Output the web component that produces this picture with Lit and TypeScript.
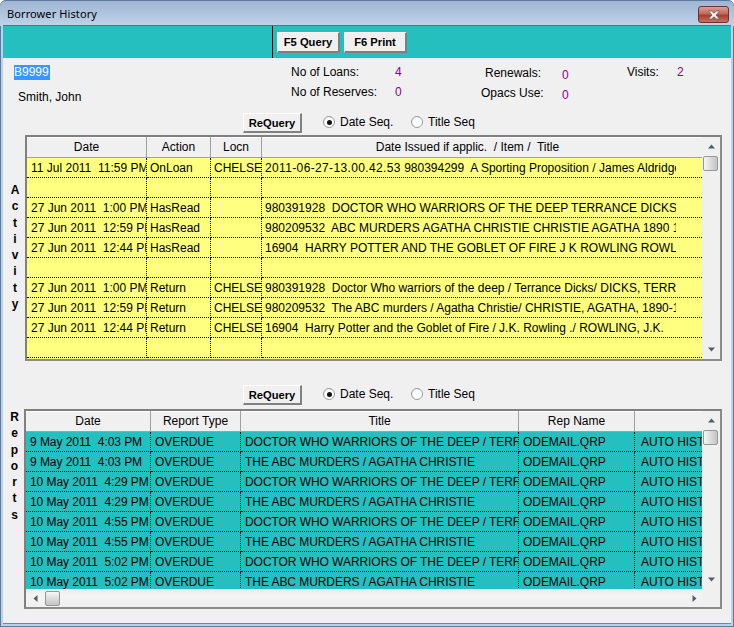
// Borrower History dialog: toolbar, counters and the two dotted data grids.
import { LitElement, html, css, nothing, svg } from 'lit';
import type { TemplateResult } from 'lit';
import { customElement, property } from 'lit/decorators.js';

interface Column {
  label: string;
  width: number;
  clip?: number; // text stops short of the cell edge
  pad?: number;
}

type Cell = string | TemplateResult;

const arrow = (d: string) =>
  html`<svg class="arrow" width="9" height="9" viewBox="0 0 9 9">${svg`<path d=${d} fill="#555c66"></path>`}</svg>`;

@customElement('data-grid')
export class DataGrid extends LitElement {
  @property({ attribute: false }) columns: Column[] = [];
  @property({ attribute: false }) rows: Cell[][] = [];
  @property() fill = '#ffff80';
  @property({ type: Number }) bodyHeight = 200;
  @property({ type: Boolean }) hscroll = false;

  private _template(): string {
    return this.columns.map((c) => `${c.width}px`).join(' ');
  }

  protected override render() {
    const cols = this._template();
    return html`
      <div class="frame">
        <div class="main">
          <div class="head" style="grid-template-columns:${cols}">
            ${this.columns.map(
              (c) => html`<div class="hcell"><span style=${c.clip ? `width:${c.clip}px` : ''}>${c.label}</span></div>`,
            )}
          </div>
          <div class="body" style="height:${this.bodyHeight}px;background:${this.fill}">
            ${this.rows.map(
              (r) => html`
                <div class="row" style="grid-template-columns:${cols}">
                  ${r.map((text, i) => {
                    const c = this.columns[i];
                    const w = c.clip ? `width:${c.clip}px;` : '';
                    const p = c.pad ? `padding-left:${c.pad}px;` : '';
                    return html`<div class="cell"><span style="${w}${p}">${text}</span></div>`;
                  })}
                </div>
              `,
            )}
          </div>
        </div>
        <div class="vs">
          <div class="btn">${arrow('M4.5 2.5 L8 6.5 L1 6.5 Z')}</div>
          <div class="thumb v"></div>
          <div class="spacer"></div>
          <div class="btn">${arrow('M1 2.5 L8 2.5 L4.5 6.5 Z')}</div>
        </div>
        ${this.hscroll
          ? html`
              <div class="hs">
                <div class="hbtn">${arrow('M2.5 4.5 L6.5 1 L6.5 8 Z')}</div>
                <div class="thumb h"></div>
                <div class="spacer"></div>
                <div class="hbtn">${arrow('M2.5 1 L6.5 4.5 L2.5 8 Z')}</div>
              </div>
              <div class="corner"></div>
            `
          : nothing}
      </div>
    `;
  }

  static override styles = css`
    :host {
      display: block;
      font: 12px/14px 'Liberation Sans', Arial, sans-serif;
      color: #000;
    }
    .frame {
      display: grid;
      grid-template-columns: 1fr 18px;
      border: 2px solid #808080;
      border-right-color: #8a8a8a;
      border-bottom-color: #8a8a8a;
      background: #f0f0f0;
    }
    .main {
      min-width: 0;
    }
    .head,
    .row {
      display: grid;
    }
    .head {
      box-shadow: inset 0 1px #fff;
    }
    .hcell {
      height: 20px;
      line-height: 21px;
      border-right: 1px solid #a0a0a0;
      border-bottom: 1px solid #a0a0a0;
      text-align: center;
      white-space: pre;
      overflow: hidden;
    }
    .hcell:last-child {
      border-right: 0;
    }
    .hcell span {
      display: block;
    }
    .body {
      overflow: hidden;
      letter-spacing: var(--row-spacing, 0);
    }
    .row {
      height: 20px;
    }
    .cell {
      box-sizing: border-box;
      height: 20px;
      line-height: 21px;
      padding-left: 3px;
      border-right: 1px dotted #000;
      border-bottom: 1px dotted #000;
      white-space: pre;
      overflow: hidden;
    }
    .cell:last-child {
      border-right: 0;
    }
    .cell span {
      display: block;
      overflow: hidden;
    }
    .vs {
      display: flex;
      flex-direction: column;
      grid-row: 1;
      grid-column: 2;
    }
    .btn {
      height: 19px;
      display: flex;
      align-items: center;
      justify-content: center;
    }
    .spacer {
      flex: 1;
    }
    .thumb {
      box-sizing: border-box;
      width: 15px;
      height: 15px;
      flex: none;
      border: 1px solid #979797;
      border-radius: 2px;
    }
    .thumb.v {
      margin-left: 1px;
      background: linear-gradient(to right, #f6f6f6, #dcdcdc 50%, #c4c4c4);
    }
    .thumb.h {
      background: linear-gradient(to bottom, #f6f6f6, #dcdcdc 50%, #c4c4c4);
    }
    .hs {
      display: flex;
      align-items: center;
      height: 18px;
      background: linear-gradient(to bottom, #e8e8e8, #f4f4f4 30%, #f0f0f0);
    }
    .hbtn {
      width: 19px;
      display: flex;
      justify-content: center;
    }
    .hs .hbtn:last-child {
      width: 16px;
    }
    .corner {
      background: #f0f0f0;
    }
    .arrow {
      display: block;
    }
    em {
      font-style: normal;
      letter-spacing: 0.36px;
    }
  `;
}

const ACTIVITY_COLS: Column[] = [
  { label: 'Date', width: 120, pad: 1 },
  { label: 'Action', width: 64 },
  { label: 'Locn', width: 51 },
  { label: 'Date Issued if applic.  / Item /  Title', width: 440, clip: 411 },
];

const ACTIVITY_ROWS: Cell[][] = [
  [
    '11 Jul 2011  11:59 PM',
    'OnLoan',
    'CHELSEA',
    html`<em>2011-06-27-13.00.42.53</em> 980394299  A Sporting Proposition / James Aldridge`,
  ],
  ['', '', '', ''],
  ['27 Jun 2011  1:00 PM', 'HasRead', '', '980391928  DOCTOR WHO WARRIORS OF THE DEEP TERRANCE DICKS'],
  ['27 Jun 2011  12:59 PM', 'HasRead', '', '980209532  ABC MURDERS AGATHA CHRISTIE CHRISTIE AGATHA 1890 1976'],
  ['27 Jun 2011  12:44 PM', 'HasRead', '', '16904  HARRY POTTER AND THE GOBLET OF FIRE J K ROWLING ROWLING J K'],
  ['', '', '', ''],
  ['27 Jun 2011  1:00 PM', 'Return', 'CHELSEA', '980391928  Doctor Who warriors of the deep / Terrance Dicks/ DICKS, TERRANCE'],
  ['27 Jun 2011  12:59 PM', 'Return', 'CHELSEA', '980209532  The ABC murders / Agatha Christie/ CHRISTIE, AGATHA, 1890-1976'],
  ['27 Jun 2011  12:44 PM', 'Return', 'CHELSEA', '16904  Harry Potter and the Goblet of Fire / J.K. Rowling ./ ROWLING, J.K.'],
  ['', '', '', ''],
];

const REPORT_COLS: Column[] = [
  { label: 'Date', width: 125, pad: 1 },
  { label: 'Report Type', width: 90, pad: 1 },
  { label: 'Title', width: 278, pad: 1 },
  { label: 'Rep Name', width: 116, pad: 1 },
  { label: '', width: 67, pad: 3 },
];

const DOCTOR = 'DOCTOR WHO WARRIORS OF THE DEEP / TERRANCE DICKS';
const ABC = 'THE ABC MURDERS / AGATHA CHRISTIE';
const REPORT_ROWS: Cell[][] = [
  '9 May 2011  4:03 PM',
  '9 May 2011  4:03 PM',
  '10 May 2011  4:29 PM',
  '10 May 2011  4:29 PM',
  '10 May 2011  4:55 PM',
  '10 May 2011  4:55 PM',
  '10 May 2011  5:02 PM',
  '10 May 2011  5:02 PM',
].map((d, i) => [d, 'OVERDUE', i % 2 ? ABC : DOCTOR, 'ODEMAIL.QRP', 'AUTO HISTORY']);

@customElement('app-root')
export class AppRoot extends LitElement {
  private _seqBar() {
    return html`
      <div class="seq">
        <button class="btn">ReQuery</button>
        <div class="radios">
          <label class="radio date"><i class="dot on"></i>Date Seq.</label>
          <label class="radio"><i class="dot"></i>Title Seq</label>
        </div>
      </div>
    `;
  }

  private _side(word: string) {
    return [...word].map((ch) => html`<div>${ch}</div>`);
  }

  protected override render() {
    return html`
      <div class="window">
        <div class="title">
          <span>Borrower History</span>
          <div class="close">
            <svg width="14" height="10" viewBox="0 0 14 10">
              <path
                d="M1.5 1 H4.6 L7 3.2 L9.4 1 H12.5 L9 5 L12.5 9 H9.4 L7 6.8 L4.6 9 H1.5 L5 5 Z"
                fill="#f4f4f4"
                stroke="#6d5a5a"
                stroke-width="0.8"
              ></path>
            </svg>
          </div>
        </div>
        <div class="toolbar">
          <div class="tools">
            <button class="btn tool">F5 Query</button>
            <button class="btn tool">F6 Print</button>
          </div>
        </div>
        <div class="content">
          <div class="info">
            <div class="who">
              <span class="barcode">B9999</span>
              <span class="name">Smith, John</span>
            </div>
            <div class="stats loans">
              <div><span>No of Loans:</span><b>4</b></div>
              <div><span>No of Reserves:</span><b>0</b></div>
            </div>
            <div class="stats renew">
              <div class="in4"><span>Renewals:</span><b>0</b></div>
              <div><span>Opacs Use:</span><b>0</b></div>
            </div>
            <div class="stats visits">
              <div><span>Visits:</span><b>2</b></div>
            </div>
          </div>

          ${this._seqBar()}
          <div class="panel first">
            <div class="side activity">${this._side('Activity')}</div>
            <data-grid .columns=${ACTIVITY_COLS} .rows=${ACTIVITY_ROWS} .bodyHeight=${201}></data-grid>
          </div>

          <div class="second">${this._seqBar()}</div>
          <div class="panel reports-panel">
            <div class="side reports">${this._side('Reports')}</div>
            <data-grid
              .columns=${REPORT_COLS}
              .rows=${REPORT_ROWS}
              .bodyHeight=${157}
              .hscroll=${true}
              fill="#26bfbf"
            ></data-grid>
          </div>
        </div>
      </div>
    `;
  }

  static override styles = css`
    :host {
      display: block;
      width: 734px;
      height: 627px;
      font: 12px/14px 'Liberation Sans', Arial, sans-serif;
      color: #000;
      background: #fff;
    }
    .window {
      box-sizing: border-box;
      width: 734px;
      height: 627px;
      display: flex;
      flex-direction: column;
      padding: 0 3px 3px;
      border-radius: 6px 6px 0 0;
      box-shadow: inset 0 0 0 1px #5b7a9e;
      background: #b9d1ea;
      overflow: hidden;
    }
    .title {
      flex: none;
      height: 25px;
      margin: 0 -3px;
      padding: 0 5px 0 7px;
      display: flex;
      align-items: center;
      justify-content: space-between;
      border-top: 1px solid #5b7a9e;
      box-sizing: content-box;
      margin-bottom: -1px;
      border-radius: 6px 6px 0 0;
      background: linear-gradient(to bottom, #9fb5d2, #bfd3ea);
      font: 11px 'Noto Sans', 'Open Sans', sans-serif;
      letter-spacing: 0.1px;
    }
    .close {
      box-sizing: border-box;
      width: 31px;
      height: 17px;
      margin-top: 2px;
      display: flex;
      align-items: center;
      justify-content: center;
      border: 1px solid #6e2f35;
      border-radius: 3px;
      background: linear-gradient(to bottom, #d9a195, #c2695a 45%, #a93c2d 55%, #c9705f);
    }
    .close svg {
      display: block;
    }
    .toolbar {
      flex: none;
      height: 32px;
      border-top: 1px solid #5f6f80;
      background: #26bfbf;
    }
    .tools {
      display: flex;
      gap: 4px;
      height: 32px;
      margin-left: 269px;
      padding: 6px 0 5px 4px;
      box-sizing: border-box;
      border-left: 1px solid #000;
    }
    .btn {
      box-sizing: border-box;
      width: 59px;
      height: 20px;
      padding: 0;
      border-style: solid;
      border-width: 1px 2px 2px 1px;
      border-color: #fff #808080 #808080 #fff;
      background: #f0f0f0;
      color: #000;
      font: bold 11.2px 'Liberation Sans', Arial, sans-serif;
    }
    .btn.tool {
      width: 63px;
      height: 21px;
    }
    .content {
      flex: 1;
      min-height: 0;
      background: #f0f0f0;
      border-bottom: 1px solid #2d9fd8;
    }
    .info {
      display: grid;
      grid-template-columns: 288px 190px 146px 1fr;
      height: 55px;
    }
    .who {
      display: flex;
      flex-direction: column;
      align-items: flex-start;
      padding: 7px 0 0 11px;
    }
    .barcode {
      height: 15px;
      padding: 0 1px 0 0;
      line-height: 15px;
      background: #3399ff;
      color: #fff;
    }
    .name {
      margin: 10px 0 0 4px;
    }
    .stats {
      display: flex;
      flex-direction: column;
      gap: 6px;
      padding-top: 7px;
    }
    .stats div {
      display: flex;
    }
    .stats b {
      font-weight: normal;
      color: #8b008b;
    }
    .loans span {
      width: 104px;
    }
    .renew {
      gap: 4px;
      padding-top: 8px;
    }
    .renew span {
      width: 81px;
    }
    .renew b {
      margin-top: 2px;
    }
    .renew .in4 {
      padding-left: 4px;
    }
    .renew .in4 span {
      width: 77px;
    }
    .visits span {
      width: 50px;
    }
    .seq {
      display: flex;
      align-items: flex-start;
      height: 20px;
      padding-left: 240px;
    }
    .radios {
      display: flex;
      margin-left: 21px;
      height: 18px;
      align-items: center;
    }
    .radio {
      display: flex;
      align-items: center;
      gap: 5px;
    }
    .radio.date {
      width: 88px;
    }
    .dot {
      box-sizing: border-box;
      width: 12px;
      height: 12px;
      display: flex;
      align-items: center;
      justify-content: center;
      border-radius: 50%;
      border: 1px solid #9a9a9a;
      background: radial-gradient(circle at 60% 60%, #fff 55%, #e2e2e2);
    }
    .dot.on::after {
      content: '';
      width: 5px;
      height: 5px;
      border-radius: 50%;
      background: #111;
    }
    .panel {
      display: flex;
      align-items: flex-start;
      margin-top: 2px;
    }
    .side {
      box-sizing: border-box;
      flex: none;
      width: 22px;
      padding-left: 2px;
      font-weight: bold;
      line-height: 16.25px;
      text-align: center;
    }
    .activity {
      padding-top: 47px;
    }
    .reports {
      width: 21px;
    }
    .reports-panel {
      margin-top: 4px;
      --row-spacing: -0.06px;
    }
    .first data-grid {
      width: 697px;
    }
    .reports-panel data-grid {
      width: 698px;
    }
    .second {
      margin-top: 24px;
    }
  `;
}

declare global {
  interface HTMLElementTagNameMap {
    'app-root': AppRoot;
    'data-grid': DataGrid;
  }
}
